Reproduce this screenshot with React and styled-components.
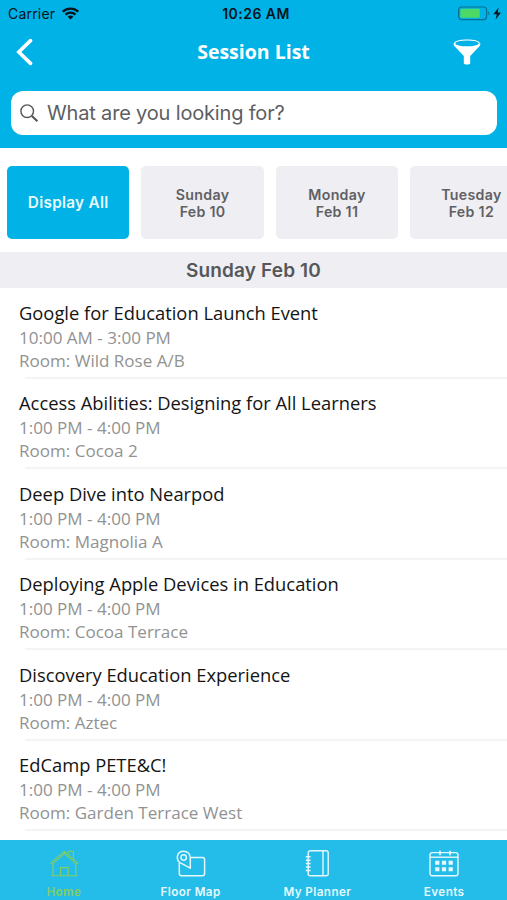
import React, { useState } from "react";
import styled, { createGlobalStyle } from "styled-components";

const days = [
    { label: "Display All" },
    { label: "Sunday", date: "Feb 10" },
    { label: "Monday", date: "Feb 11" },
    { label: "Tuesday", date: "Feb 12" },
];

const sessions = [
    { title: "Google for Education Launch Event", time: "10:00 AM - 3:00 PM", room: "Wild Rose A/B" },
    { title: "Access Abilities: Designing for All Learners", time: "1:00 PM - 4:00 PM", room: "Cocoa 2" },
    { title: "Deep Dive into Nearpod", time: "1:00 PM - 4:00 PM", room: "Magnolia A" },
    { title: "Deploying Apple Devices in Education", time: "1:00 PM - 4:00 PM", room: "Cocoa Terrace" },
    { title: "Discovery Education Experience", time: "1:00 PM - 4:00 PM", room: "Aztec" },
    { title: "EdCamp PETE&C!", time: "1:00 PM - 4:00 PM", room: "Garden Terrace West" },
];

const tabs = [
    { label: "Home", icon: HomeIcon },
    { label: "Floor Map", icon: MapIcon },
    { label: "My Planner", icon: PlannerIcon },
    { label: "Events", icon: EventsIcon },
];

export default function App() {
    const [day, setDay] = useState(0);
    const [tab, setTab] = useState("Home");

    return (
        <>
            <GlobalStyle />
            <Screen>
                <Header>
                    <StatusBar>
                        <Carrier>
                            Carrier
                            <WifiIcon />
                        </Carrier>
                        <Clock>10:26 AM</Clock>
                        <Power>
                            <BatteryIcon />
                        </Power>
                    </StatusBar>
                    <NavBar>
                        <IconButton aria-label="Back">
                            <BackIcon />
                        </IconButton>
                        <Title>Session List</Title>
                        <IconButton aria-label="Filter" $end>
                            <FunnelIcon />
                        </IconButton>
                    </NavBar>
                    <SearchBox>
                        <SearchIcon />
                        <SearchInput placeholder="What are you looking for?" />
                    </SearchBox>
                </Header>

                <Days>
                    {days.map((d, i) => (
                        <Day key={d.label} $active={i === day} onClick={() => setDay(i)}>
                            <span>{d.label}</span>
                            {d.date && <span>{d.date}</span>}
                        </Day>
                    ))}
                </Days>

                <SectionTitle>Sunday Feb 10</SectionTitle>

                <Sessions>
                    {sessions.map((s) => (
                        <Session key={s.title}>
                            <SessionTitle>{s.title}</SessionTitle>
                            <Detail>{s.time}</Detail>
                            <Detail>Room: {s.room}</Detail>
                        </Session>
                    ))}
                </Sessions>

                <TabBar>
                    {tabs.map(({ label, icon: Icon }) => (
                        <Tab key={label} $active={label === tab} onClick={() => setTab(label)}>
                            <Icon />
                            <TabLabel>{label}</TabLabel>
                        </Tab>
                    ))}
                </TabBar>
            </Screen>
        </>
    );
}

function WifiIcon() {
    return (
        <svg width="17" height="13" viewBox="0 0 17 13" fill="none" stroke="#06141b" strokeWidth="2.3">
            <path d="M0.8 4.7C5 0.5 12 0.5 16.2 4.7" />
            <path d="M3.5 7.6C6.3 4.9 10.7 4.9 13.5 7.6" />
            <path d="M8.5 12.6L5.6 9.7C7.2 8.2 9.8 8.2 11.4 9.7Z" fill="#06141b" stroke="none" />
        </svg>
    );
}

function BatteryIcon() {
    return (
        <svg width="44" height="15" viewBox="0 0 44 15" fill="none">
            <rect x="0.6" y="1" width="28" height="12.6" rx="3" stroke="#0a6f91" strokeWidth="1.2" />
            <rect x="2.4" y="2.8" width="19.4" height="9" rx="1" fill="#4cd964" />
            <path d="M30.2 5.4C31.7 6 31.7 8.6 30.2 9.2Z" fill="#0a6f91" />
            <path d="M40.6 1.6L35.4 8.2H38.8L37.6 13.6L43 6.4H39.6Z" fill="#06141b" />
        </svg>
    );
}

function BackIcon() {
    return (
        <svg width="18" height="28" viewBox="0 0 18 28" fill="none" stroke="#fff" strokeWidth="3.6">
            <path d="M15.5 2.6L3.8 14L15.5 25.4" strokeLinecap="round" />
        </svg>
    );
}

function FunnelIcon() {
    return (
        <svg width="28" height="28" viewBox="0 0 28 28" fill="#fff">
            <path d="M0.6 6C1 2.6 7 1.4 14 1.4S27 2.6 27.4 6C27.5 7.2 26.5 8.2 25.5 9.2L17.2 18V25.2C17.2 27 10.8 27 10.8 25.2V18L2.5 9.2C1.5 8.2 0.5 7.2 0.6 6Z" />
            <ellipse cx="14" cy="5.4" rx="11.8" ry="2.9" fill="#00b2e6" />
        </svg>
    );
}

function SearchIcon() {
    return (
        <svg width="19" height="19" viewBox="0 0 19 19" fill="none" stroke="#55565a">
            <circle cx="7.2" cy="7.2" r="6.3" strokeWidth="1.4" />
            <path d="M11.9 11.9L17.4 17.2" strokeWidth="2.1" />
        </svg>
    );
}

function HomeIcon() {
    return (
        <svg width="30" height="28" viewBox="0 0 30 28" fill="none" stroke="currentColor" strokeWidth="1.1">
            <path d="M2 12.8L15.4 1.4L28.8 12.8L27.6 14.2L15.4 3.6L3.2 14.2Z" strokeLinejoin="round" />
            <path d="M4 13.8V25.8H26.8V13.8M1.8 25.8H29" />
            <path d="M11.6 25.8V17.6H19.2V25.8" />
            <path d="M19 4.2C18.6 1.9 20 0.9 21.6 1.2C23.8 0.9 25 2.4 24.4 4.3V9" />
        </svg>
    );
}

function MapIcon() {
    return (
        <svg width="30" height="28" viewBox="0 0 30 28" fill="none" stroke="currentColor" strokeWidth="1.5">
            <path d="M14 7.4H26.5Q28.6 7.4 28.6 9.5V23.6Q28.6 25.7 26.5 25.7H5.4Q3.3 25.7 3.3 23.6V13" />
            <path d="M14.3 18.2L3.5 12.3C-0.3 9 0.9 1.2 7.4 1.2C12 1.2 14.3 4.5 14.3 8.4Z" strokeLinejoin="round" />
            <circle cx="7.7" cy="7.5" r="2.7" />
        </svg>
    );
}

function PlannerIcon() {
    return (
        <svg width="30" height="28" viewBox="0 0 30 28" fill="none" stroke="currentColor" strokeWidth="1.4">
            <rect x="6.2" y="0.8" width="20" height="25" rx="2" />
            <path d="M21 0.8V25.8" />
            <path d="M3.8 6.8H8.6M3.8 10.2H8.6M3.8 13.6H8.6M3.8 17H8.6M3.8 20.4H8.6" strokeWidth="1.5" />
        </svg>
    );
}

function EventsIcon() {
    return (
        <svg width="30" height="28" viewBox="0 0 30 28" fill="none" stroke="currentColor" strokeWidth="1.4">
            <rect x="1" y="2.6" width="28" height="23.2" rx="2.2" />
            <path d="M1 7.2H29" />
            <path d="M11 0.8V5.2M21 0.8V5.2" strokeWidth="1.8" />
            <path d="M6.2 12.8H10.4M12.9 12.8H17.1M19.6 12.8H23.8M6.2 19.2H10.4M12.9 19.2H17.1M19.6 19.2H23.8" strokeWidth="4" />
        </svg>
    );
}

const GlobalStyle = createGlobalStyle`
    * {
        box-sizing: border-box;
    }

    body {
        margin: 0;
        overflow: hidden;
        background: #fff;
    }

    button {
        border: none;
        padding: 0;
        font: inherit;
        cursor: pointer;
    }
`;

const Screen = styled.div`
    display: flex;
    flex-direction: column;
    width: 100%;
    height: 100vh;
    overflow: hidden;
    font-family: Inter, sans-serif;
    background: #fff;
`;

const Header = styled.header`
    flex: none;
    height: 147.5px;
    background: #00b2e6;
`;

const StatusBar = styled.div`
    display: grid;
    grid-template-columns: 1fr auto 1fr;
    align-items: center;
    height: 27px;
    padding: 0 5px 0 8px;
    font-size: 14px;
    color: #06141b;
`;

const Carrier = styled.div`
    display: flex;
    align-items: center;
    gap: 7px;
    letter-spacing: 0.2px;
`;

const Clock = styled.div`
    margin-left: 2px;
    font-weight: 600;
    letter-spacing: 0.45px;
`;

const Power = styled.div`
    display: flex;
    justify-content: flex-end;
`;

const NavBar = styled.div`
    display: grid;
    grid-template-columns: 1fr auto 1fr;
    align-items: center;
    height: 50px;
    padding: 0 26px 0 15px;
`;

const IconButton = styled.button`
    display: flex;
    justify-self: ${(props) => (props.$end ? "end" : "start")};
    background: none;
`;

const Title = styled.h1`
    margin: 0 0 0 11px;
    font: 700 19.5px/26px "Open Sans", sans-serif;
    color: #fff;
`;

const SearchBox = styled.label`
    display: flex;
    align-items: center;
    gap: 8px;
    height: 44px;
    margin: 14px 10px 0 11px;
    padding: 0 9px;
    border-radius: 12px;
    background: #fff;
`;

const SearchInput = styled.input`
    flex: 1;
    min-width: 0;
    padding: 0;
    border: none;
    outline: none;
    font: 400 20px Inter, sans-serif;
    letter-spacing: -0.17px;

    &::placeholder {
        color: #5d5e62;
        opacity: 1;
    }
`;

const Days = styled.div`
    display: flex;
    flex: none;
    gap: 12px;
    height: 104px;
    padding: 18.5px 0 12.5px 7px;
    overflow: hidden;
`;

const Day = styled.button`
    display: flex;
    flex: 0 0 122.4px;
    flex-direction: column;
    align-items: center;
    justify-content: center;
    border-radius: 5px;
    font-size: ${(props) => (props.$active ? "15.3px" : "14.2px")};
    font-weight: 600;
    line-height: ${(props) => (props.$active ? "18px" : "17px")};
    letter-spacing: 0.3px;
    color: ${(props) => (props.$active ? "#e9f9fe" : "#5f6064")};
    background: ${(props) => (props.$active ? "#00b2e6" : "#efeef3")};
`;

const SectionTitle = styled.h2`
    flex: none;
    height: 36.5px;
    margin: 0;
    font-size: 19px;
    font-weight: 600;
    line-height: 38px;
    letter-spacing: 0.15px;
    text-align: center;
    color: #56575b;
    background: #efeef3;
`;

const Sessions = styled.div`
    flex: 1;
    min-height: 0;
    overflow: hidden;
`;

const Session = styled.div`
    height: 90.4px;
    padding: 12px 0 0 19px;
    font-family: "Open Sans", sans-serif;

    &::after {
        content: "";
        display: block;
        height: 2px;
        margin: 5px 0 0 6px;
        background: #f4f4f4;
    }
`;

const SessionTitle = styled.div`
    margin-bottom: 1px;
    font-size: 18.35px;
    line-height: 25px;
    color: #141414;
`;

const Detail = styled.div`
    font-size: 17.05px;
    line-height: 23px;
    color: #929292;
`;

const TabBar = styled.nav`
    display: grid;
    grid-template-columns: repeat(4, 1fr);
    flex: none;
    height: 60px;
    background: #24bce8;
`;

const Tab = styled.button`
    display: flex;
    flex-direction: column;
    align-items: center;
    padding: 10px 0 0 1px;
    color: ${(props) => (props.$active ? "#84cf5c" : "#e6f8fd")};
    background: none;
`;

const TabLabel = styled.span`
    margin-top: 6px;
    font-size: 11.7px;
    font-weight: 600;
    line-height: 16px;
    letter-spacing: 0.4px;
`;
